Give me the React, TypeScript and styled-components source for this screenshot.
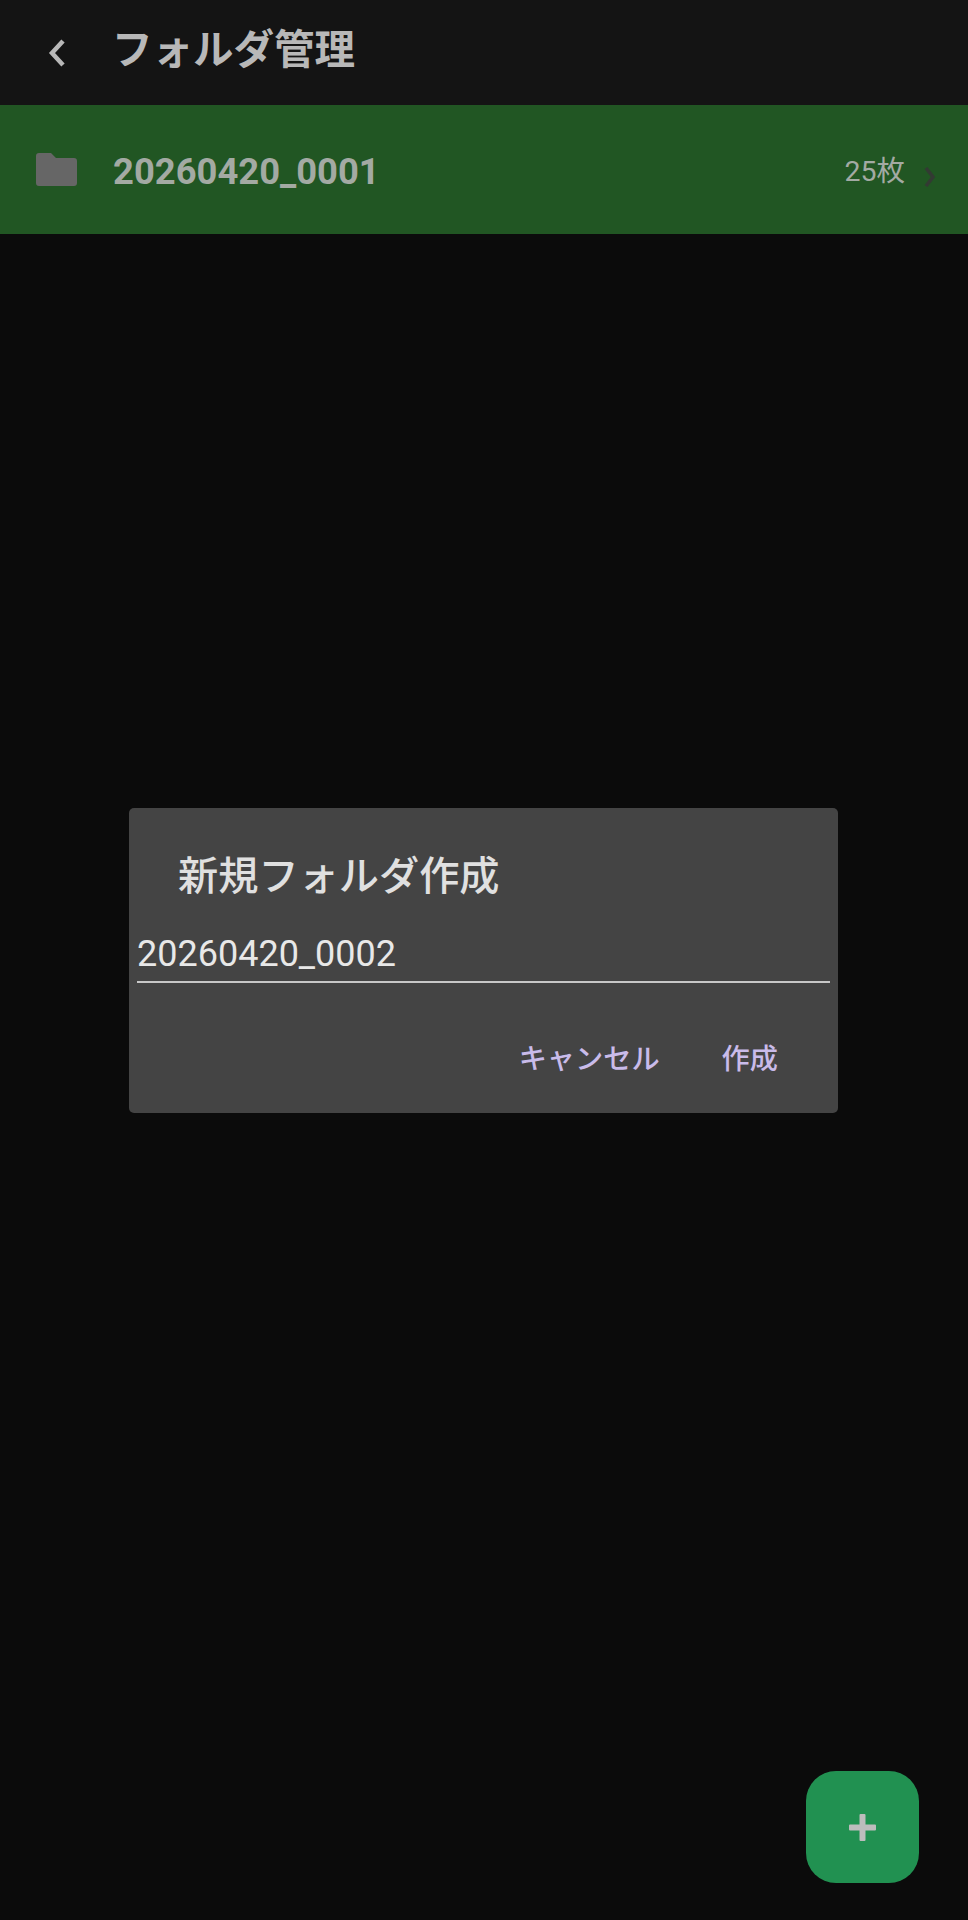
import React from "react";
import styled, { createGlobalStyle } from "styled-components";

const GlobalStyle = createGlobalStyle`
  html, body {
    margin: 0;
    padding: 0;
    background: #0b0b0b;
  }

  body {
    font-family: Roboto, "Noto Sans CJK JP", sans-serif;
  }

  * {
    box-sizing: border-box;
  }
`;

const Screen = styled.div`
  position: relative;
  width: 968px;
  height: 1920px;
  overflow: hidden;
  background: #0b0b0b;
`;

const Header = styled.header`
  display: flex;
  align-items: center;
  height: 105px;
  padding: 0 0 5px 48px;
  background: #141414;
`;

const BackButton = styled.button`
  display: flex;
  width: 18px;
  height: 28px;
  margin: 6px 46px 0 0;
  padding: 0;
  border: none;
  background: none;
  color: #b8b8b8;
`;

const HeaderTitle = styled.h1`
  margin: 0;
  font-size: 40.5px;
  font-weight: 700;
  line-height: 1;
  color: #b8b8b8;
`;

const FolderRow = styled.div`
  display: flex;
  align-items: center;
  height: 129px;
  padding: 0 32px 0 36px;
  background: #215623;
`;

const FolderIcon = styled.svg`
  width: 41px;
  height: 33px;
  margin-right: 36px;
  fill: #666666;
`;

const FolderName = styled.span`
  flex: 1;
  margin-top: 3px;
  font-size: 36.4px;
  font-weight: 700;
  color: #a3aaa3;
`;

const FolderCount = styled.span`
  margin: 0 19px 3px 0;
  font-size: 28.5px;
  color: #a3aaa3;
`;

const RowChevron = styled.svg`
  width: 12px;
  height: 20px;
  margin-top: 14px;
  color: #333a33;
`;

const Overlay = styled.div`
  position: absolute;
  inset: 0;
  display: flex;
  align-items: center;
  justify-content: center;
  padding-right: 1px;
`;

const Dialog = styled.div`
  display: flex;
  flex-direction: column;
  width: 709px;
  height: 305px;
  padding: 0 8px;
  border-radius: 5px;
  background: #444444;
`;

const DialogTitle = styled.h2`
  margin: 0;
  padding: 39px 0 0 41px;
  font-size: 40.2px;
  font-weight: 500;
  line-height: 60px;
  color: #e0e0e0;
`;

const NameInput = styled.input`
  width: 100%;
  height: 55px;
  margin-top: 21px;
  padding: 0;
  border: none;
  border-bottom: 2.5px solid #c8c8c8;
  outline: none;
  background: none;
  font-family: inherit;
  font-size: 36px;
  color: #e8e8e8;
`;

const DialogActions = styled.div`
  display: flex;
  justify-content: flex-end;
  gap: 62px;
  margin-top: 57px;
  padding-right: 52px;
`;

const TextButton = styled.button`
  padding: 0;
  border: none;
  background: none;
  font-family: inherit;
  font-size: 28.2px;
  font-weight: 500;
  line-height: 40px;
  color: #c9bbea;
`;

const Fab = styled.button`
  position: absolute;
  right: 49px;
  bottom: 37px;
  display: flex;
  align-items: center;
  justify-content: center;
  width: 113px;
  height: 112px;
  padding: 0;
  border: none;
  border-radius: 30px;
  background: #219151;
  color: #bdbdbd;
`;

const PlusIcon = styled.svg`
  width: 27px;
  height: 27px;
  fill: currentColor;
`;

export default function App() {
  return (
    <Screen>
      <GlobalStyle />
      <Header>
        <BackButton aria-label="戻る">
          <svg width="18" height="28" viewBox="0 0 18 28" fill="none">
            <path d="M15 2 L4 14 L15 26" stroke="currentColor" strokeWidth="4.5" />
          </svg>
        </BackButton>
        <HeaderTitle>フォルダ管理</HeaderTitle>
      </Header>
      <FolderRow>
        <FolderIcon viewBox="0 0 41 33">
          <path d="M3 0 H15 L20 5 H38 A3 3 0 0 1 41 8 V30 A3 3 0 0 1 38 33 H3 A3 3 0 0 1 0 30 V3 A3 3 0 0 1 3 0 Z" />
        </FolderIcon>
        <FolderName>20260420_0001</FolderName>
        <FolderCount>25枚</FolderCount>
        <RowChevron viewBox="0 0 12 20" fill="none">
          <path d="M2 1 L9 10 L2 19" stroke="currentColor" strokeWidth="3.5" />
        </RowChevron>
      </FolderRow>
      <Overlay>
        <Dialog>
          <DialogTitle>新規フォルダ作成</DialogTitle>
          <NameInput defaultValue="20260420_0002" />
          <DialogActions>
            <TextButton>キャンセル</TextButton>
            <TextButton>作成</TextButton>
          </DialogActions>
        </Dialog>
      </Overlay>
      <Fab aria-label="フォルダ追加">
        <PlusIcon viewBox="0 0 27 27">
          <path d="M10.5 1 a1 1 0 0 1 1 -1 H15.5 a1 1 0 0 1 1 1 V10.5 H26 a1 1 0 0 1 1 1 V15.5 a1 1 0 0 1 -1 1 H16.5 V26 a1 1 0 0 1 -1 1 H11.5 a1 1 0 0 1 -1 -1 V16.5 H1 a1 1 0 0 1 -1 -1 V11.5 a1 1 0 0 1 1 -1 H10.5 Z" />
        </PlusIcon>
      </Fab>
    </Screen>
  );
}
